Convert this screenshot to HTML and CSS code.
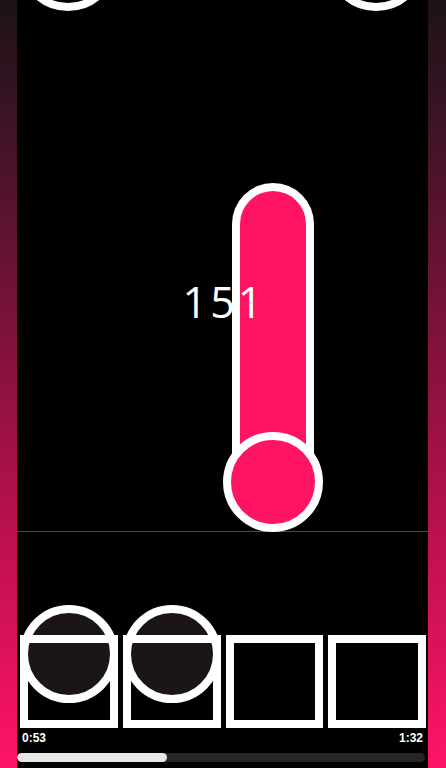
FILE: index.html
```html
<!DOCTYPE html>
<html lang="en">
<head>
<meta charset="utf-8">
<title>Thermo</title>
<link rel="stylesheet" href="styles.css">
</head>
<body>
<main class="stage">
  <section class="field">
    <div class="ball ball-left"></div>
    <div class="ball ball-right"></div>
    <div class="thermo">
      <div class="tube"></div>
      <div class="bulb"></div>
    </div>
    <div class="score">151</div>
  </section>
  <div class="divider"></div>
  <section class="lower">
    <div class="slots">
      <div class="slot"><div class="disc"></div><div class="frame"></div></div>
      <div class="slot"><div class="disc"></div><div class="frame"></div></div>
      <div class="slot"><div class="frame"></div></div>
      <div class="slot"><div class="frame"></div></div>
    </div>
    <div class="times">
      <span>0:53</span>
      <span>1:32</span>
    </div>
    <div class="progress"><div class="progress-fill" style="width:150px"></div></div>
  </section>
</main>
</body>
</html>
```
FILE: styles.css
```css
html, body {
  margin: 0;
  padding: 0;
}
body {
  width: 446px;
  height: 768px;
  overflow: hidden;
  background: linear-gradient(to bottom, #1c1317 0%, #3a1425 15%, #b8104f 68%, #ff1466 100%);
}
.stage {
  margin-left: 17px;
  width: 411px;
  height: 768px;
  background: #000;
  display: flex;
  flex-direction: column;
  overflow: hidden;
}
.field {
  position: relative;
  height: 531px;
  flex: none;
  display: flex;
  flex-direction: column;
  align-items: center;
}
.ball {
  position: absolute;
  top: -89px;
  width: 84px;
  height: 84px;
  border: 8px solid #fff;
  border-radius: 50%;
  background: #000;
}
.ball-left { left: 1px; }
.ball-right { left: 309px; }
.thermo {
  position: absolute;
  left: 206px;
  top: 183px;
  width: 100px;
  height: 349px;
}
.tube {
  position: absolute;
  left: 9px;
  top: 0;
  width: 66px;
  height: 300px;
  border: 8px solid #fff;
  border-bottom: none;
  border-radius: 41px 41px 0 0;
  background: #ff1464;
}
.bulb {
  position: absolute;
  left: 0;
  top: 249px;
  width: 84px;
  height: 84px;
  border: 8px solid #fff;
  border-radius: 50%;
  background: #ff1464;
}
.score {
  position: relative;
  margin-top: 277px;
  font-family: "Open Sans", "Noto Sans", sans-serif;
  font-size: 43px;
  line-height: 50px;
  font-weight: 400;
  color: #fff;
  letter-spacing: 3px;
  padding-left: 3px;
}
.divider {
  height: 1px;
  background: #4a4a4a;
  flex: none;
}
.lower {
  flex: 1;
  padding: 103px 2px 0 3px;
  display: flex;
  flex-direction: column;
}
.slots {
  display: grid;
  grid-template-columns: repeat(4, 1fr);
  gap: 5px;
  height: 93px;
}
.slot {
  position: relative;
  isolation: isolate;
}
.frame {
  position: absolute;
  inset: 0;
  z-index: 2;
  border: 8px solid #fff;
}
.disc {
  position: absolute;
  z-index: 1;
  top: -30px;
  left: 50%;
  margin-left: -49px;
  width: 82px;
  height: 82px;
  border: 8px solid #fff;
  border-radius: 50%;
  background: #1b1517;
}
.times {
  display: flex;
  justify-content: space-between;
  padding: 0 3px 0 2px;
  margin-top: 3px;
  font-family: "Liberation Sans", Arial, sans-serif;
  font-weight: 700;
  font-size: 12px;
  line-height: 14px;
  color: #fff;
}
.progress {
  margin: 8px 0 0 -3px;
  width: 408px;
  height: 9px;
  border-radius: 5px;
  background: #262626;
  overflow: hidden;
}
.progress-fill {
  height: 100%;
  background: #e6e6e6;
  border-radius: 5px;
}
```
